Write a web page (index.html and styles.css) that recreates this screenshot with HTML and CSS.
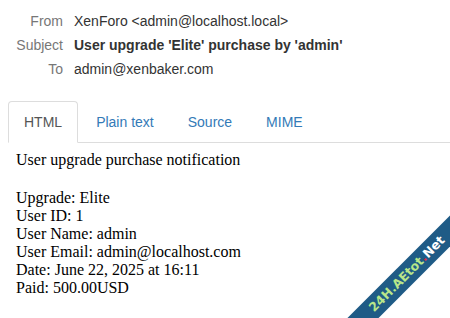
FILE: index.html
```html
<!DOCTYPE html>
<html>
<head>
<meta charset="utf-8">
<link rel="stylesheet" href="styles.css">
</head>
<body>
<div class="headers">
  <div class="label">From</div><div class="value">XenForo &lt;admin@localhost.local&gt;</div>
  <div class="label">Subject</div><div class="value subject">User upgrade 'Elite' purchase by 'admin'</div>
  <div class="label">To</div><div class="value">admin@xenbaker.com</div>
</div>
<ul class="tabs">
  <li class="tab active">HTML</li>
  <li class="tab">Plain text</li>
  <li class="tab">Source</li>
  <li class="tab">MIME</li>
</ul>
<div class="content">
  <p>User upgrade purchase notification</p>
  <p>Upgrade: Elite<br>User ID: 1<br>User Name: admin<br>User Email: admin@localhost.com<br>Date: June 22, 2025 at 16:11<br>Paid: 500.00USD</p>
</div>
<div class="ribbon"><span class="g">24H.AEtot</span><span class="r">.</span><span class="w">Net</span></div>
</body>
</html>
```
FILE: styles.css
```css
html, body { margin: 0; padding: 0; background: #fff; overflow: hidden; }
body { width: 450px; height: 318px; position: relative; font-family: "Liberation Sans", Arial, sans-serif; font-size: 14px; color: #333; }
.headers {
  display: grid;
  grid-template-columns: 63px auto;
  column-gap: 11px;
  padding-top: 9px;
  line-height: 24px;
}
.label { text-align: right; color: #777; }
.value { color: #333; }
.subject { font-weight: bold; }
.tabs {
  list-style: none;
  margin: 20px 0 0 8px;
  padding: 0;
  display: flex;
  border-bottom: 1px solid #ddd;
}
.tab {
  padding: 10px 15px;
  line-height: 20px;
  margin-right: 2px;
  margin-bottom: -1px;
  color: #337ab7;
  border: 1px solid transparent;
  border-radius: 4px 4px 0 0;
}
.tab.active {
  color: #555;
  border-color: #ddd #ddd transparent #ddd;
  background: #fff;
}
.content {
  padding: 8px 0 0 16px;
  font-family: "Liberation Serif", "Times New Roman", serif;
  font-size: 16px;
  color: #000;
}
.content p { margin: 0 0 20px 0; }
.ribbon {
  position: absolute;
  left: 312px;
  top: 263px;
  width: 190px;
  height: 22px;
  line-height: 22px;
  background: #1f5b86;
  transform: rotate(-45deg);
  text-align: center;
  font-family: "DejaVu Sans", sans-serif;
  font-weight: bold;
  font-size: 12.5px;
}
.ribbon .g { color: #b8e68a; }
.ribbon .r { color: #e0304a; }
.ribbon .w { color: #fff; }
```
